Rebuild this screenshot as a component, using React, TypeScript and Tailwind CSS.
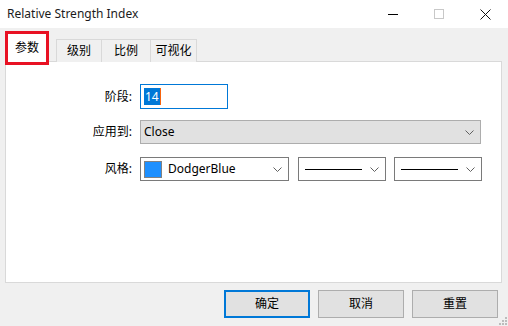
import React from "react";

const font = {
  fontFamily: '"Noto Sans", "Noto Sans CJK SC", sans-serif',
};

const Chevron: React.FC = () => (
  <svg width="9" height="5" viewBox="0 0 9 5" className="shrink-0">
    <path d="M0.5 0.5 L4.5 4.5 L8.5 0.5" fill="none" stroke="#606060" strokeWidth="1" />
  </svg>
);

const App: React.FC = () => {
  const tabs = ["级别", "比例", "可视化"];

  return (
    <div
      className="w-[508px] h-[326px] bg-[#f0f0f0] flex flex-col text-[12px] text-black relative overflow-hidden"
      style={font}
    >
      {/* title bar */}
      <div className="h-[28px] bg-white flex items-center shrink-0">
        <span className="pl-[7px] text-[12px] text-[#1b1b1b]">Relative Strength Index</span>
        <div className="ml-auto flex items-center h-full">
          <div className="w-[46px] h-full flex items-center justify-center">
            <div className="w-[10px] h-px bg-black" />
          </div>
          <div className="w-[46px] h-full flex items-center justify-center">
            <div className="w-[10px] h-[10px] border border-[#c8c8c8]" />
          </div>
          <div className="w-[46px] h-full flex items-center justify-center">
            <svg width="11" height="11" viewBox="0 0 11 11">
              <path d="M0.5 0.5 L10.5 10.5 M10.5 0.5 L0.5 10.5" stroke="#111" strokeWidth="1" />
            </svg>
          </div>
        </div>
      </div>

      {/* tabs */}
      <div className="flex items-end h-[34px] pl-[7px] shrink-0 relative z-10">
        <div className="h-[29px] w-[40px] bg-white border border-b-0 border-[#d9d9d9] flex items-center justify-center relative">
          <span>参数</span>
          <div className="absolute -left-[3px] -right-[3px] top-[-3px] bottom-[-3px] border-[3px] border-[#e81123]" />
        </div>
        {tabs.map((t, i) => (
          <div
            key={t}
            className={`h-[23px] border border-b-0 border-[#d9d9d9] bg-[#f0f0f0] flex items-center justify-center ${
              i === 0 ? "ml-[9px] w-[46px]" : i === 1 ? "w-[49px] border-l-0" : "w-[46px] border-l-0"
            }`}
          >
            {t}
          </div>
        ))}
      </div>

      {/* panel */}
      <div className="mx-[5px] mr-[6px] h-[222px] -mt-px bg-white border border-[#d9d9d9] shrink-0 pt-[22px]">
        <div className="flex items-center h-[25px]">
          <div className="w-[128px] text-right pr-[2px]">阶段:</div>
          <div className="ml-[6px] w-[88px] h-[25px] border border-[#0078d7] flex items-center pl-[3px]">
            <span className="bg-[#0078d7] text-white leading-[17px] px-px">14</span>
            <span className="w-px h-[17px] bg-[#f7630c]" />
          </div>
        </div>

        <div className="flex items-center h-[24px] mt-[11px]">
          <div className="w-[128px] text-right pr-[2px]">应用到:</div>
          <div className="ml-[6px] w-[341px] h-[24px] border border-[#adadad] bg-[#e1e1e1] flex items-center pl-[3px] pr-[6px]">
            <span>Close</span>
            <span className="ml-auto">
              <Chevron />
            </span>
          </div>
        </div>

        <div className="flex items-center h-[24px] mt-[13px]">
          <div className="w-[128px] text-right pr-[2px]">风格:</div>
          <div className="ml-[6px] w-[149px] h-[24px] border border-[#7a7a7a] bg-white flex items-center pl-[3px] pr-[6px]">
            <span className="w-[18px] h-[17px] bg-[#1e90ff] border border-[#828282]" />
            <span className="ml-[6px]">DodgerBlue</span>
            <span className="ml-auto">
              <Chevron />
            </span>
          </div>
          <div className="ml-[9px] w-[88px] h-[24px] border border-[#7a7a7a] bg-white flex items-center pl-[6px] pr-[6px]">
            <span className="w-[57px] h-px bg-black" />
            <span className="ml-auto">
              <Chevron />
            </span>
          </div>
          <div className="ml-[8px] w-[88px] h-[24px] border border-[#7a7a7a] bg-white flex items-center pl-[6px] pr-[6px]">
            <span className="w-[57px] h-px bg-black" />
            <span className="ml-auto">
              <Chevron />
            </span>
          </div>
        </div>
      </div>

      {/* buttons */}
      <div className="flex justify-end gap-[8px] pr-[10px] mt-[7px]">
        <button className="w-[86px] h-[28px] border-2 border-[#0078d7] bg-[#e1e1e1]">确定</button>
        <button className="w-[86px] h-[28px] border border-[#adadad] bg-[#e1e1e1]">取消</button>
        <button className="w-[86px] h-[28px] border border-[#adadad] bg-[#e1e1e1]">重置</button>
      </div>

      {/* size grip */}
      <svg width="8" height="8" viewBox="0 0 8 8" className="absolute right-[1px] bottom-[1px]">
        <rect x="6" y="0" width="2" height="2" fill="#bcbcbc" />
        <rect x="3" y="3" width="2" height="2" fill="#bcbcbc" />
        <rect x="6" y="3" width="2" height="2" fill="#bcbcbc" />
        <rect x="0" y="6" width="2" height="2" fill="#bcbcbc" />
        <rect x="3" y="6" width="2" height="2" fill="#bcbcbc" />
        <rect x="6" y="6" width="2" height="2" fill="#bcbcbc" />
      </svg>
    </div>
  );
};

export default App;
